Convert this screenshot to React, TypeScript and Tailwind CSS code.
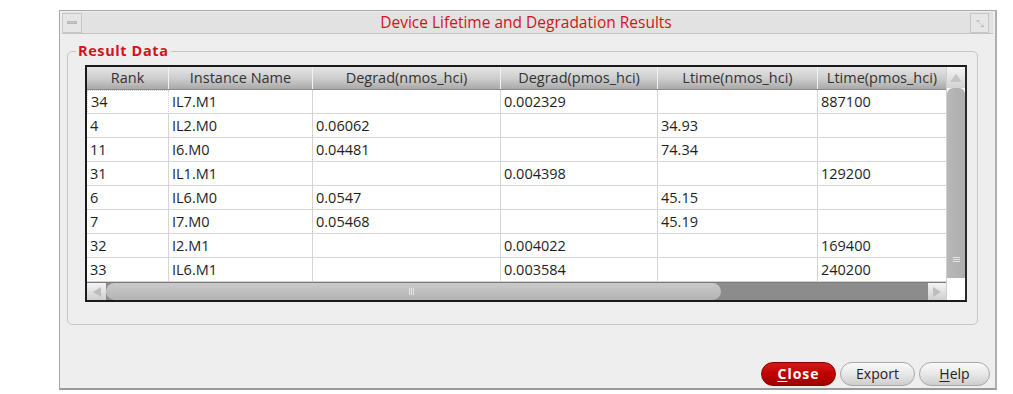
import React from "react";

const cols = ["Rank", "Instance Name", "Degrad(nmos_hci)", "Degrad(pmos_hci)", "Ltime(nmos_hci)", "Ltime(pmos_hci)"];

const rows = [
  ["34", "IL7.M1", "", "0.002329", "", "887100"],
  ["4", "IL2.M0", "0.06062", "", "34.93", ""],
  ["11", "I6.M0", "0.04481", "", "74.34", ""],
  ["31", "IL1.M1", "", "0.004398", "", "129200"],
  ["6", "IL6.M0", "0.0547", "", "45.15", ""],
  ["7", "I7.M0", "0.05468", "", "45.19", ""],
  ["32", "I2.M1", "", "0.004022", "", "169400"],
  ["33", "IL6.M1", "", "0.003584", "", "240200"],
];

const grid = "grid grid-cols-[82px_144px_188px_157px_160px_128px]";

const App = () => {
  return (
    <div className="w-[1013px] h-[394px] bg-white pt-[10px] pl-[59px] font-['Open_Sans','Noto_Sans',sans-serif] text-[14.5px] text-[#1e1e1e]">
      <div className="w-[938px] h-[380px] border border-[#a8a8a8] border-b-2 border-b-[#9a9a9a] border-r-2 border-r-[#b0b0b0] bg-[#eeeeee] flex flex-col">
        {/* title bar */}
        <div className="h-[22px] mx-[2px] mt-[1px] flex items-center border-b border-[#c4c4c4] bg-[#e2e2e2]">
          <div className="w-[20px] h-[20px] border border-[#c8c8c8] bg-[#e6e6e6] flex items-center justify-center">
            <div className="w-[10px] h-[3px] bg-[#c8c8c8] border border-[#b8b8b8]" />
          </div>
          <div className="flex-1 text-center text-[15.5px] text-[#d0141c] leading-none">
            Device Lifetime and Degradation Results
          </div>
          <div className="w-[19px] h-[20px] mr-[4px] border border-[#c8c8c8] bg-[#e6e6e6] flex items-center justify-center text-[10px] text-[#bbb] leading-none">
            ⤡
          </div>
        </div>

        {/* group box */}
        <div className="relative mt-[17px] ml-[7px] w-[911px] h-[274px] border border-[#c6c6c6] rounded-[5px] pt-[13px] pl-[17px]">
          <div className="absolute -top-[11px] left-[8px] px-[2px] bg-[#eeeeee] text-[14.5px] font-bold text-[#d0141c] tracking-[0.6px] leading-[20px]">
            Result Data
          </div>

          {/* table */}
          <div className="w-[882px] h-[237px] border-2 border-[#1a1a1a] border-r-[#2a2a2a] bg-white flex">
            <div className="flex flex-col w-[859px]">
              <div className={`${grid} h-[23px] bg-gradient-to-b from-[#e4e4e4] via-[#cfcfcf] to-[#a9a9a9] border-b border-[#8a8a8a]`}>
                {cols.map((c, i) => (
                  <div key={c} className={`flex items-center justify-center text-[#333] ${i < 5 ? "border-r border-[#f2f2f2]" : ""}`}>
                    {c}
                  </div>
                ))}
              </div>
              {rows.map((r, ri) => (
                <div key={ri} className={`${grid} h-[24px] border-b border-[#d4d4d4]`}>
                  {r.map((v, ci) => (
                    <div
                      key={ci}
                      className={`flex items-center pl-[3px] ${ci < 5 ? "border-r border-[#d4d4d4]" : ""} ${
                        ri === 0 && ci === 0 ? "border border-dotted border-[#333]" : ""
                      }`}
                    >
                      {v}
                    </div>
                  ))}
                </div>
              ))}
              {/* horizontal scrollbar */}
              <div className="h-[18px] flex bg-[#8c8c8c] border-t border-[#7a7a7a]">
                <div className="w-[19px] bg-gradient-to-b from-[#f4f4f4] to-[#cfcfcf] flex items-center justify-center">
                  <div className="w-0 h-0 border-y-[5px] border-y-transparent border-r-[8px] border-r-[#bdbdbd]" />
                </div>
                <div className="w-[615px] bg-gradient-to-b from-[#cacaca] to-[#b4b4b4] rounded-full flex items-center justify-center">
                  <div className="flex gap-[1px] ml-[-5px]">
                    <div className="w-[1px] h-[7px] bg-[#e6e6e6]" />
                    <div className="w-[1px] h-[7px] bg-[#e6e6e6]" />
                    <div className="w-[1px] h-[7px] bg-[#e6e6e6]" />
                  </div>
                </div>
                <div className="flex-1" />
                <div className="w-[18px] bg-gradient-to-b from-[#f4f4f4] to-[#cfcfcf] flex items-center justify-center">
                  <div className="w-0 h-0 border-y-[5px] border-y-transparent border-l-[8px] border-l-[#bdbdbd]" />
                </div>
              </div>
            </div>
            {/* vertical scrollbar */}
            <div className="w-[19px] flex flex-col border-l border-[#cfcfcf] bg-white">
              <div className="h-[21px] bg-gradient-to-b from-[#f6f6f6] to-[#d2d2d2] flex items-center justify-center">
                <div className="w-0 h-0 border-x-[6px] border-x-transparent border-b-[8px] border-b-[#c4c4c4]" />
              </div>
              <div className="h-[190px] bg-gradient-to-r from-[#b8b8b8] to-[#aeaeae] rounded-t-[6px] flex flex-col items-center justify-end pb-[16px]">
                <div className="flex flex-col gap-[1px]">
                  <div className="w-[7px] h-[1px] bg-[#e2e2e2]" />
                  <div className="w-[7px] h-[1px] bg-[#e2e2e2]" />
                  <div className="w-[7px] h-[1px] bg-[#e2e2e2]" />
                </div>
              </div>
            </div>
          </div>
        </div>

        {/* buttons */}
        <div className="flex justify-end gap-[4px] pr-[5px] mt-[37px]">
          <button className="w-[75px] h-[24px] rounded-full bg-gradient-to-b from-[#d81818] via-[#c00000] to-[#a00000] border border-[#8a0000] text-white font-bold text-[14px] tracking-[1px] leading-none">
            <span className="underline underline-offset-2">C</span>lose
          </button>
          <button className="w-[75px] h-[24px] rounded-full bg-gradient-to-b from-[#fafafa] via-[#e8e8e8] to-[#cdcdcd] border border-[#a8a8a8] text-[#222] text-[14px] leading-none">
            Export
          </button>
          <button className="w-[71px] h-[24px] rounded-full bg-gradient-to-b from-[#fafafa] via-[#e8e8e8] to-[#cdcdcd] border border-[#a8a8a8] text-[#222] text-[14px] leading-none">
            <span className="underline underline-offset-2">H</span>elp
          </button>
        </div>
      </div>
    </div>
  );
};

export default App;
